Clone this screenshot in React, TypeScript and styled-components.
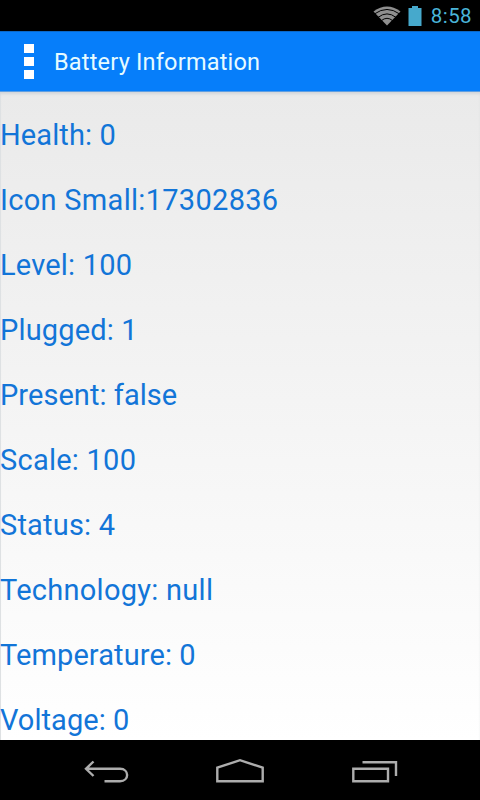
import styled, {createGlobalStyle} from "styled-components";

const GlobalStyle = createGlobalStyle`
  * {
    box-sizing: border-box;
  }
  body {
    margin: 0;
    background: #000;
    font-family: Roboto, "Liberation Sans", sans-serif;
  }
`

const Screen = styled.div`
  display: flex;
  flex-direction: column;
  width: 480px;
  height: 800px;
  overflow: hidden;
  background: #000;
`

const StatusBar = styled.div`
  display: flex;
  flex: none;
  align-items: center;
  justify-content: flex-end;
  height: 31px;
  padding: 1px 8px 0 0;
`

const StatusIcon = styled.svg<{ $gap: number }>`
  display: block;
  margin-right: ${props => props.$gap}px;
`

const Clock = styled.span`
  color: #4ab4d8;
  font-size: 20.5px;
  line-height: 30px;
  letter-spacing: 0.4px;
`

const Header = styled.header`
  display: flex;
  flex: none;
  align-items: center;
  height: 61px;
  padding-left: 24px;
  background: #067efa;
  border-top: 1px solid #0a68c8;
  border-bottom: 1px solid #5f9fe2;
`

const MenuDots = styled.div`
  display: flex;
  flex-direction: column;
  gap: 4px;
  margin-right: 20px;
`

const Dot = styled.span`
  width: 10px;
  height: 9px;
  background: #fff;
`

const Title = styled.h1`
  margin: 0;
  padding-top: 1px;
  color: #e6fbff;
  font-size: 23.5px;
  font-weight: 400;
  line-height: 30px;
  letter-spacing: 0.2px;
`

const List = styled.ul`
  flex: 1;
  min-height: 0;
  margin: 0;
  padding: 11px 0 0;
  overflow: hidden;
  list-style: none;
  background: linear-gradient(#eaeaea, #fff);
  box-shadow: inset 0 3px 3px -1px #d2d6da, inset 1px 0 0 #e0e2e5;
`

const Row = styled.li<{ $tracking: number }>`
  height: 65px;
  color: #1275d8;
  font-size: 29px;
  line-height: 65px;
  letter-spacing: ${props => props.$tracking}px;
  white-space: nowrap;
`

const NavBar = styled.nav`
  display: flex;
  flex: none;
  align-items: center;
  justify-content: center;
  gap: 84px;
  height: 60px;
  padding-top: 4px;
`

const NavIcon = styled.svg`
  display: block;
  fill: none;
  stroke: #adadad;
  stroke-width: 2.4;
`

const values = [
    {text: 'Health: 0', tracking: 0.12},
    {text: 'Icon Small:17302836', tracking: 0.3},
    {text: 'Level: 100', tracking: 0.2},
    {text: 'Plugged: 1', tracking: 0.15},
    {text: 'Present: false', tracking: 0.05},
    {text: 'Scale: 100', tracking: 0.25},
    {text: 'Status: 4', tracking: 0.2},
    {text: 'Technology: null', tracking: 0.27},
    {text: 'Temperature: 0', tracking: 0.1},
    {text: 'Voltage: 0', tracking: 0.05},
]

const WifiIcon = () => (
    <StatusIcon $gap={7} width="28" height="20" viewBox="0 0 28 20">
        <path d="M0.5 5.5Q14 -4.5 27.5 5.5L14 19.5Z" fill="#8f8f8f"/>
        <path
            d="M1.5 7.9Q14 -1 26.5 7.9M5 11.4Q14 4.4 23 11.4M8.4 14.6Q14 10 19.6 14.6"
            fill="none"
            stroke="#000"
            strokeWidth="1"
        />
    </StatusIcon>
)

const BatteryIcon = () => (
    <StatusIcon $gap={9} width="14" height="20" viewBox="0 0 14 20">
        <path d="M4 0H10V2H13.5V20H0.5V2H4Z" fill="#46a9cc"/>
    </StatusIcon>
)

export default function App() {
    return (
        <Screen>
            <GlobalStyle/>
            <StatusBar>
                <WifiIcon/>
                <BatteryIcon/>
                <Clock>8:58</Clock>
            </StatusBar>
            <Header>
                <MenuDots>
                    <Dot/>
                    <Dot/>
                    <Dot/>
                </MenuDots>
                <Title>Battery Information</Title>
            </Header>
            <List>
                {values.map(({text, tracking}) => (
                    <Row key={text} $tracking={tracking}>{text}</Row>
                ))}
            </List>
            <NavBar>
                <NavIcon width="50" height="28" viewBox="82 758 50 28">
                    <path d="M93.5 761.5L86 768.8L93.5 776M86 768.8H120C129.5 768.8 129.5 781.2 120 781.2H104.5"/>
                </NavIcon>
                <NavIcon width="48" height="28" viewBox="216 758 48 28">
                    <path d="M217.3 781.2V767.7L240 760.2L262.7 767.7V781.2Z"/>
                </NavIcon>
                <NavIcon width="50" height="28" viewBox="348 758 50 28">
                    <path d="M353.3 768.8H388V781.2H353.3ZM362.5 762.3H396V776"/>
                </NavIcon>
            </NavBar>
        </Screen>
    )
}
